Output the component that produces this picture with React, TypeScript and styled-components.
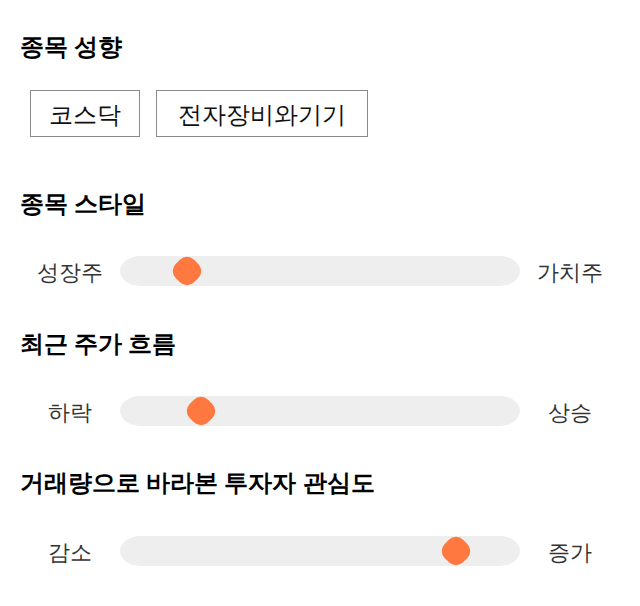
import React from 'react';
import styled, { createGlobalStyle } from 'styled-components';

const GlobalStyle = createGlobalStyle`
  html, body {
    margin: 0;
    padding: 0;
    background: #ffffff;
  }
  body {
    font-family: 'Noto Sans', sans-serif;
    color: #111111;
  }
`;

const Page = styled.div`
  width: 640px;
  padding: 31px 0 0;
  box-sizing: border-box;
`;

const Section = styled.section<{ $space: number }>`
  display: flex;
  flex-direction: column;
  margin-bottom: ${p => p.$space}px;
`;

const Heading = styled.h2<{ $gap: number }>`
  margin: 0 0 ${p => p.$gap}px;
  padding-left: 20px;
  font-size: 24px;
  line-height: 30px;
  font-weight: 700;
  color: #000000;
`;

const TagRow = styled.div`
  display: flex;
  gap: 16px;
  padding-left: 30px;
`;

const Tag = styled.div<{ $pad: number }>`
  height: 47px;
  box-sizing: border-box;
  border: 1px solid #8a8a8a;
  padding: 0 ${p => p.$pad}px;
  display: flex;
  align-items: center;
  font-size: 24px;
  color: #111111;
`;

const SliderRow = styled.div`
  display: flex;
  align-items: center;
  gap: 10px;
  padding: 0 30px;
`;

const SideLabel = styled.span`
  width: 80px;
  text-align: center;
  font-size: 22px;
  line-height: 30px;
  color: #333333;
`;

const Track = styled.div`
  flex: 1;
  height: 30px;
  position: relative;
  background: #eeeeee;
  border-radius: 20px / 15px;
`;

const Thumb = styled.div`
  position: absolute;
  top: 50%;
  width: 26px;
  height: 26px;
  margin: -13px 0 0 -13px;
  background: #ff7840;
  border-radius: 10px;
  transform: rotate(45deg);
`;

type SliderProps = { left: string; right: string; value: number };

const Slider: React.FC<SliderProps> = ({ left, right, value }) => (
  <SliderRow>
    <SideLabel>{left}</SideLabel>
    <Track>
      <Thumb style={{ left: `${value}%` }} />
    </Track>
    <SideLabel>{right}</SideLabel>
  </SliderRow>
);

const App: React.FC = () => {
  return (
    <>
      <GlobalStyle />
      <Page>
        <Section $space={51}>
          <Heading $gap={29}>종목 성향</Heading>
          <TagRow>
            <Tag $pad={18}>코스닥</Tag>
            <Tag $pad={21}>전자장비와기기</Tag>
          </TagRow>
        </Section>

        <Section $space={42}>
          <Heading $gap={38}>종목 스타일</Heading>
          <Slider left="성장주" right="가치주" value={16.8} />
        </Section>

        <Section $space={41}>
          <Heading $gap={38}>최근 주가 흐름</Heading>
          <Slider left="하락" right="상승" value={20.3} />
        </Section>

        <Section $space={0}>
          <Heading $gap={39}>거래량으로 바라본 투자자 관심도</Heading>
          <Slider left="감소" right="증가" value={83.9} />
        </Section>
      </Page>
    </>
  );
};

export default App;
